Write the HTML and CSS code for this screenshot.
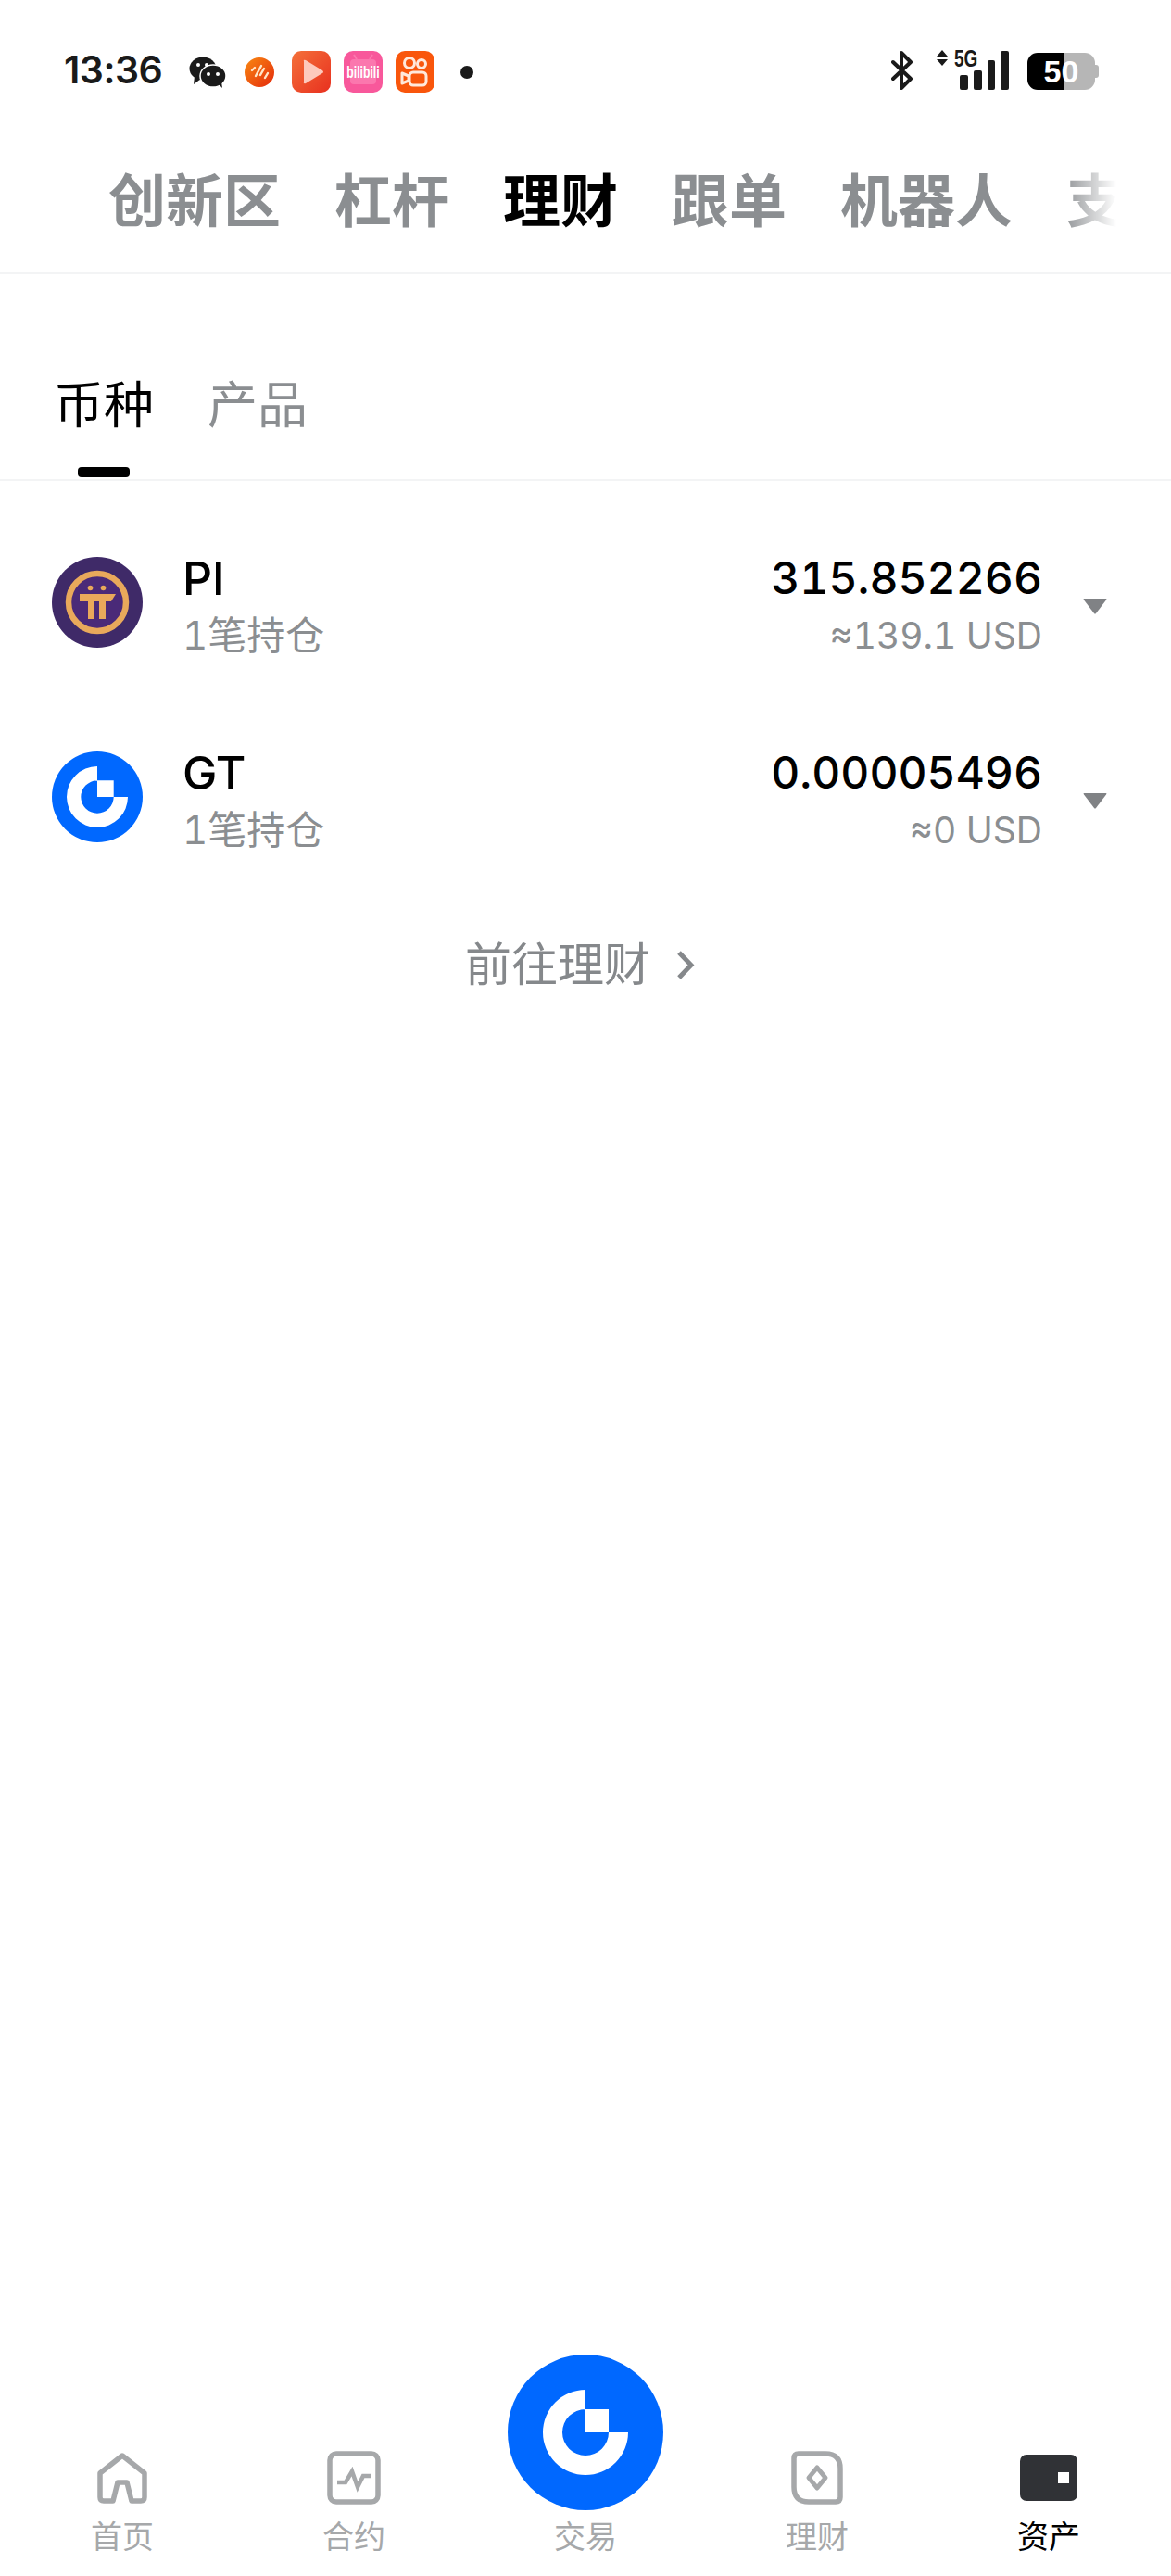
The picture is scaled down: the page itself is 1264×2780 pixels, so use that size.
FILE: index.html
```html
<!DOCTYPE html>
<html lang="zh-CN">
<head>
    <meta charset="UTF-8">
    <title>资产</title>
    <link rel="stylesheet" href="styles.css">
</head>
<body>
    <div class="page">
        <!-- 状态栏 -->
        <div class="status-bar">
            <span class="clock">13:36</span>
            <div class="notify-icons">
                <svg class="ico-wechat" width="40" height="34" viewBox="0 0 40 34">
                    <ellipse cx="15" cy="13" rx="14.5" ry="12.5" fill="#1a1a1a"/>
                    <path d="M6 21 L5 30 L13 24 Z" fill="#1a1a1a"/>
                    <ellipse cx="26" cy="21" rx="14" ry="12" fill="#1a1a1a" stroke="#fff" stroke-width="1.5"/>
                    <path d="M32 30 L36 34 L35 27 Z" fill="#1a1a1a"/>
                    <circle cx="10" cy="9" r="2" fill="#fff"/>
                    <circle cx="19" cy="9" r="2" fill="#fff"/>
                    <circle cx="21" cy="19" r="2" fill="#fff"/>
                    <circle cx="31" cy="19" r="2" fill="#fff"/>
                </svg>
                <svg class="ico-podcast" width="32" height="32" viewBox="0 0 32 32">
                    <defs>
                        <linearGradient id="podcastGrad" x1="0" y1="0" x2="1" y2="1">
                            <stop offset="0" stop-color="#f98a12"/>
                            <stop offset="1" stop-color="#e42a0c"/>
                        </linearGradient>
                    </defs>
                    <circle cx="16" cy="16" r="16" fill="url(#podcastGrad)"/>
                    <path d="M8 14 L11 11 M12 20 L18 9 M17 19 L21 12 M22 22 L25 17" stroke="#ffe6c8" stroke-width="2.4" stroke-linecap="round"/>
                </svg>
                <svg class="ico-app" width="42" height="45" viewBox="0 0 42 45">
                    <defs>
                        <linearGradient id="playGrad" x1="0" y1="0" x2="1" y2="1">
                            <stop offset="0" stop-color="#f4713a"/>
                            <stop offset="1" stop-color="#e8301f"/>
                        </linearGradient>
                    </defs>
                    <rect width="42" height="45" rx="10" fill="url(#playGrad)"/>
                    <path d="M13 11 Q12 9 15 10 L33 21 Q35 23 33 24 L15 35 Q12 36 13 33 Z" fill="#fdc9bd"/>
                </svg>
                <svg class="ico-app" width="42" height="45" viewBox="0 0 42 45">
                    <rect width="42" height="45" rx="10" fill="#f8589b"/>
                    <rect x="7" y="9" width="28" height="27" rx="4" fill="#fb77ae"/>
                    <path d="M14 9 L11 4 M28 9 L31 4" stroke="#fb77ae" stroke-width="2"/>
                    <text class="bili-text" transform="translate(21 29) scale(.68 1)" text-anchor="middle">bilibili</text>
                </svg>
                <svg class="ico-app" width="42" height="45" viewBox="0 0 42 45">
                    <rect width="42" height="45" rx="10" fill="#f9560c"/>
                    <g fill="none" stroke="#ffe9dc" stroke-width="3">
                        <circle cx="15" cy="13" r="5.5"/>
                        <circle cx="28" cy="14" r="4.5"/>
                        <rect x="15" y="23" width="18" height="14" rx="4"/>
                        <path d="M14 27 L7 24 V35 L14 32 Z" stroke-linejoin="round"/>
                    </g>
                </svg>
            </div>
            <span class="notify-dot"></span>

            <div class="status-right">
                <svg class="ico-bt" width="24" height="42" viewBox="0 0 24 42">
                    <path d="M2 12 L21 30 L11 40 V2 L21 12 L2 30" fill="none" stroke="#1a1a1a" stroke-width="4" stroke-linejoin="round" stroke-linecap="round"/>
                </svg>
                <svg class="ico-signal" width="78" height="51" viewBox="0 -8 78 51">
                    <path d="M6 0 L12 7 H0 Z M6 17 L12 10 H0 Z" fill="#1a1a1a"/>
                    <text class="net-text" transform="translate(19 17.5) scale(.76 1)">5G</text>
                    <rect x="25" y="27" width="9" height="16" rx="2" fill="#1a1a1a"/>
                    <rect x="40" y="22" width="9" height="21" rx="2" fill="#1a1a1a"/>
                    <rect x="55" y="11" width="8" height="32" rx="2" fill="#1a1a1a"/>
                    <rect x="69" y="1" width="9" height="42" rx="2" fill="#1a1a1a"/>
                </svg>
                <div class="battery">50</div>
            </div>
        </div>

        <!-- 顶部分类 -->
        <div class="top-tabs-wrap">
            <div class="top-tabs">
                <span class="top-tab">创新区</span>
                <span class="top-tab">杠杆</span>
                <span class="top-tab active">理财</span>
                <span class="top-tab">跟单</span>
                <span class="top-tab">机器人</span>
                <span class="top-tab">支</span>
            </div>
        </div>

        <!-- 币种 / 产品 -->
        <div class="sub-tabs">
            <div class="sub-tab active">币种</div>
            <div class="sub-tab">产品</div>
        </div>

        <div class="coin-list">
            <div class="coin-row">
                <svg class="coin-icon" width="98" height="98" viewBox="-49 -49 98 98">
                    <circle r="49" fill="#3f2a68"/>
                    <circle r="31" fill="#4a2a78" stroke="#e9a95b" stroke-width="6.5"/>
                    <g fill="#e9a95b">
                        <circle cx="-7.5" cy="-15.5" r="2.8"/>
                        <circle cx="6.5" cy="-15.5" r="2.8"/>
                        <path d="M-19 -9 H20 L15 -1 H9 V18 H2 V-1 H-3.5 V18 H-10 V-1 H-19 Z"/>
                    </g>
                </svg>
                <div class="coin-name">
                    <div class="coin-symbol">PI</div>
                    <div class="coin-count">1笔持仓</div>
                </div>
                <div class="coin-amount">
                    <div class="amount-main">315.852266</div>
                    <div class="amount-sub">≈139.1 USD</div>
                </div>
                <svg class="coin-arrow" width="26" height="17" viewBox="0 0 26 17">
                    <path d="M1 0 H25 Q26 0 25 1.5 L14 16 Q13 17 12 16 L1 1.5 Q0 0 1 0 Z" fill="#808285"/>
                </svg>
            </div>

            <div class="coin-row">
                <svg class="coin-icon" width="98" height="98" viewBox="-49 -49 98 98">
                    <circle r="49" fill="#0068ff"/>
                    <path d="M0 -33 A33 33 0 1 0 33 0 H17.7 A17.7 17.7 0 1 1 0 -17.7 H17.7 V0 H0 Z" fill="#fff"/>
                </svg>
                <div class="coin-name">
                    <div class="coin-symbol">GT</div>
                    <div class="coin-count">1笔持仓</div>
                </div>
                <div class="coin-amount">
                    <div class="amount-main">0.00005496</div>
                    <div class="amount-sub">≈0 USD</div>
                </div>
                <svg class="coin-arrow" width="26" height="17" viewBox="0 0 26 17">
                    <path d="M1 0 H25 Q26 0 25 1.5 L14 16 Q13 17 12 16 L1 1.5 Q0 0 1 0 Z" fill="#808285"/>
                </svg>
            </div>
        </div>

        <div class="goto-row">
            <span class="goto-text">前往理财</span>
            <svg width="20" height="33" viewBox="0 0 20 33">
                <path d="M3 3 L16 16.5 L3 30" fill="none" stroke="#85888b" stroke-width="5"/>
            </svg>
        </div>

        <!-- 底部导航 -->
        <div class="bottom-nav">
            <div class="nav-item">
                <svg class="nav-icon" width="56" height="58" viewBox="0 0 56 58">
                    <path d="M28 5 L52 24 V50 Q52 54 48 54 H38 L33 34 H23 L18 54 H8 Q4 54 4 50 V24 Z" fill="none" stroke="#a6a8aa" stroke-width="5.5" stroke-linejoin="round"/>
                </svg>
                <span class="nav-label">首页</span>
            </div>
            <div class="nav-item">
                <svg class="nav-icon" width="58" height="58" viewBox="0 0 58 58">
                    <rect x="3" y="3" width="52" height="52" rx="7" fill="none" stroke="#a6a8aa" stroke-width="5.5"/>
                    <path d="M11 34 H20 L27 22 L33 39 L39 27 H47" fill="none" stroke="#a6a8aa" stroke-width="4.5"/>
                </svg>
                <span class="nav-label">合约</span>
            </div>
            <div class="nav-item nav-trade">
                <svg width="168" height="168" viewBox="-84 -84 168 168">
                    <circle r="84" fill="#0068ff"/>
                    <path d="M0 -46 A46 46 0 1 0 46 0 H25 A25 25 0 1 1 0 -25 H25 V0 H0 Z" fill="#fff"/>
                </svg>
                <span class="nav-label">交易</span>
            </div>
            <div class="nav-item">
                <svg class="nav-icon" width="56" height="58" viewBox="0 0 56 58">
                    <path d="M8 3 H37 Q53 3 53 19 V50 Q53 55 48 55 H19 Q3 55 3 39 V8 Q3 3 8 3 Z" fill="none" stroke="#a6a8aa" stroke-width="5.5"/>
                    <path d="M28 18 L37 29 L28 40 L19 29 Z" fill="none" stroke="#a6a8aa" stroke-width="5" stroke-linejoin="round"/>
                </svg>
                <span class="nav-label">理财</span>
            </div>
            <div class="nav-item active">
                <svg class="nav-icon" width="62" height="58" viewBox="0 0 62 58">
                    <rect y="4" width="62" height="50" rx="7" fill="#303236"/>
                    <rect x="41" y="23" width="12" height="12" fill="#fff"/>
                </svg>
                <span class="nav-label">资产</span>
            </div>
        </div>
    </div>
</body>
</html>
```

FILE: styles.css
```css
* {
    box-sizing: border-box;
}

html, body {
    margin: 0;
    padding: 0;
    background: #fff;
}

body {
    font-family: "Inter", "Noto Sans CJK SC", sans-serif;
    color: #000;
}

.page {
    width: 1264px;
    height: 2780px;
    display: flex;
    flex-direction: column;
    overflow: hidden;
}

/* status bar */
.status-bar {
    height: 150px;
    display: flex;
    align-items: flex-start;
    padding: 55px 0 0 69px;
}

.clock {
    width: 135px;
    font-size: 41px;
    line-height: 41px;
    font-weight: 600;
    letter-spacing: -0.5px;
    color: #1a1a1a;
}

.notify-icons {
    display: flex;
    align-items: center;
    gap: 14px;
    height: 45px;
}

.ico-wechat {
    margin-right: 6px;
}

.ico-podcast {
    margin-right: 5px;
}

.bili-text {
    font-family: "Liberation Sans", sans-serif;
    font-size: 18px;
    font-weight: 700;
    fill: #fff;
}

.net-text {
    font-family: "Liberation Sans", sans-serif;
    font-size: 25px;
    font-weight: 700;
    fill: #1a1a1a;
}

.notify-dot {
    width: 14px;
    height: 14px;
    border-radius: 50%;
    background: #1a1a1a;
    margin: 16px 0 0 28px;
}

.status-right {
    display: flex;
    align-items: flex-start;
    margin-left: 451px;
}

.ico-signal {
    margin-left: 25px;
    margin-top: -9px;
}

.battery {
    position: relative;
    width: 73px;
    height: 40px;
    margin: 2px 0 0 20px;
    border-radius: 11px;
    background: linear-gradient(to right, #000 39px, #b6b6b6 39px);
    color: #fff;
    font-family: "Liberation Sans", sans-serif;
    font-size: 34px;
    font-weight: 700;
    line-height: 40px;
    text-align: center;
}

.battery::after {
    content: "";
    position: absolute;
    right: -4px;
    top: 13px;
    width: 4px;
    height: 14px;
    border-radius: 0 3px 3px 0;
    background: #b6b6b6;
}

/* top tabs */
.top-tabs-wrap {
    height: 146px;
    border-bottom: 2px solid #f3f4f5;
}

.top-tabs {
    width: 1215px;
    height: 100%;
    padding: 28px 0 0 117px;
    display: flex;
    gap: 58px;
    overflow: hidden;
    -webkit-mask-image: linear-gradient(to right, #000 1145px, transparent 1205px);
    mask-image: linear-gradient(to right, #000 1145px, transparent 1205px);
}

.top-tab {
    flex-shrink: 0;
    font-size: 62px;
    line-height: 80px;
    font-weight: 700;
    color: #8b8e91;
}

.top-tab.active {
    color: #000;
}

/* sub tabs */
.sub-tabs {
    height: 223px;
    border-bottom: 2px solid #f3f4f5;
    padding: 106px 0 0 58px;
    display: flex;
    gap: 58px;
}

.sub-tab {
    font-size: 54px;
    line-height: 72px;
    color: #8b8e91;
    position: relative;
    height: 115px;
}

.sub-tab.active {
    color: #000;
}

.sub-tab.active::after {
    content: "";
    position: absolute;
    left: 26px;
    bottom: 2px;
    width: 56px;
    height: 11px;
    border-radius: 4px;
    background: #000;
}

/* coin list */
.coin-list {
    padding-top: 26px;
}

.coin-row {
    height: 210px;
    display: flex;
    align-items: center;
    padding: 0 69px 0 56px;
}

.coin-icon {
    flex-shrink: 0;
}

.coin-name {
    flex: 1;
    margin-left: 43px;
    padding-top: 7px;
}

.coin-symbol {
    font-size: 50px;
    line-height: 58px;
    font-weight: 500;
}

.coin-count {
    font-size: 42px;
    line-height: 52px;
    margin-top: 7px;
    color: #8b8e91;
    font-feature-settings: "tnum";
}

.coin-amount {
    text-align: right;
    padding-top: 7px;
    font-feature-settings: "tnum";
}

.amount-main {
    font-size: 48px;
    line-height: 58px;
    font-weight: 500;
}

.amount-sub {
    font-size: 39px;
    line-height: 52px;
    margin-top: 7px;
    color: #8b8e91;
}

.coin-arrow {
    margin: 8px 0 0 44px;
}

/* goto */
.goto-row {
    display: flex;
    align-items: center;
    justify-content: center;
    gap: 28px;
    padding-right: 12px;
    margin-top: 41px;
}

.goto-text {
    font-size: 50px;
    line-height: 70px;
    color: #85888b;
}

/* bottom nav */
.bottom-nav {
    margin-top: auto;
    padding: 0 7px 19px;
    display: grid;
    grid-template-columns: repeat(5, 250px);
    align-items: end;
}

.nav-item {
    display: flex;
    flex-direction: column;
    align-items: center;
}

.nav-label {
    font-size: 34px;
    line-height: 46px;
    margin-top: 12px;
    color: #a6a8aa;
}

.nav-trade .nav-label {
    margin-top: 6px;
}

.nav-item.active .nav-label {
    color: #000;
}
```
